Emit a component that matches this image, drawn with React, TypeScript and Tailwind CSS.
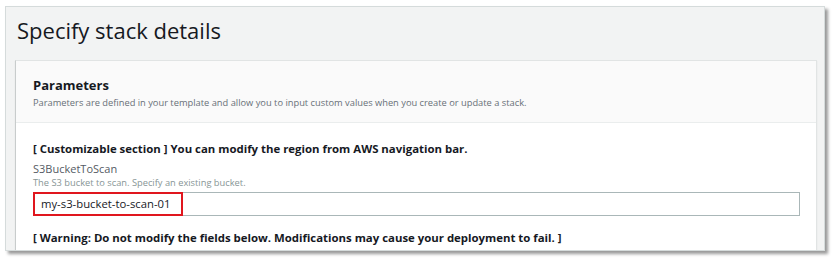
import React from "react";

const font = { fontFamily: '"Open Sans", "Noto Sans", sans-serif' };

const App = () => {
  return (
    <div className="w-[835px] h-[259px] bg-white pl-[5px] pt-[6px]" style={font}>
      <div className="w-[820px] h-[245px] bg-[#f2f3f3] border border-[#d5dbdb] shadow-[3px_3px_3px_rgba(0,0,0,0.4)] overflow-hidden">
        <h1 className="pl-[11px] pt-[8px] h-[53px] text-[22px] leading-[30px] text-[#16191f]">
          Specify stack details
        </h1>

        <div className="ml-[9px] mr-[7px] h-[200px] bg-white border border-[#e1e4e4] border-l-[#c8cccc] shadow-[0_1px_1px_rgba(0,0,0,0.1)]">
          <div className="h-[62px] bg-[#fafafa] border-b border-[#eaeded] pl-[17px] pt-[14px]">
            <h2 className="text-[13px] leading-[20px] font-bold text-[#16191f]">Parameters</h2>
            <p className="text-[9.3px] leading-[15px] text-[#687078]">
              Parameters are defined in your template and allow you to input custom values when you create or
              update a stack.
            </p>
          </div>

          <div className="pl-[17px] pr-[16px] pt-[17px]">
            <p className="text-[11.4px] leading-[18px] font-bold text-[#16191f]">
              [ Customizable section ] You can modify the region from AWS navigation bar.
            </p>
            <div className="mt-[3px] text-[11px] leading-[15px] text-[#545b64]">S3BucketToScan</div>
            <div className="text-[9.3px] leading-[13px] text-[#879596]">
              The S3 bucket to scan. Specify an existing bucket.
            </div>
            <div className="relative mt-[3px] h-[24px] w-[767px] border border-[#aab7b8] bg-white">
              <div className="absolute left-[-1px] top-[-1px] h-[24px] w-[150px] border-2 border-[#e0161e]" />
              <span className="block pl-[7px] text-[11.3px] leading-[22px] text-[#16191f]">my-s3-bucket-to-scan-01</span>
            </div>
            <p className="mt-[13px] text-[11.4px] leading-[18px] font-bold text-[#16191f]">
              [ Warning: Do not modify the fields below. Modifications may cause your deployment to fail. ]
            </p>
          </div>
        </div>
      </div>
    </div>
  );
};

export default App;
